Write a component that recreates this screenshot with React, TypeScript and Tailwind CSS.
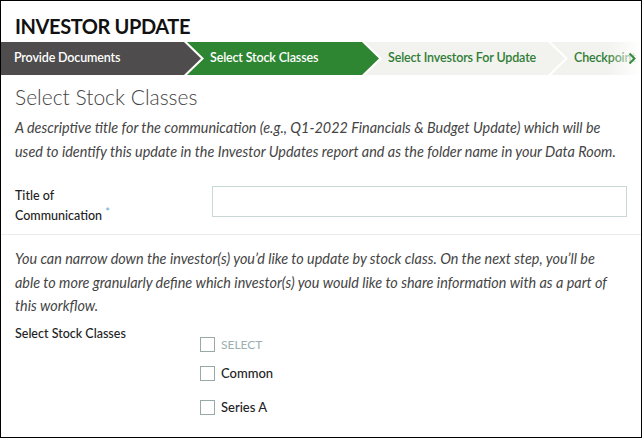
import React from "react";

const steps = [
  { label: "Provide Documents", width: 200, bg: "bg-[#4e4c4c]", text: "text-white", first: true },
  { label: "Select Stock Classes", width: 192, bg: "bg-[#2e8532]", text: "text-white" },
  { label: "Select Investors For Update", width: 200, bg: "bg-[#f2f2ef]", text: "text-[#2f7d34]" },
  { label: "Checkpoint", width: 140, bg: "bg-[#f2f2ef]", text: "text-[#2f7d34]" },
];

const firstClip = "polygon(0 0, calc(100% - 17px) 0, 100% 50%, calc(100% - 17px) 100%, 0 100%)";
const midClip =
  "polygon(0 0, calc(100% - 17px) 0, 100% 50%, calc(100% - 17px) 100%, 0 100%, 17px 50%)";

const StepBar = () => (
  <div className="relative mt-[3px] flex h-[33px] overflow-hidden bg-white">
    {steps.map((s, i) => (
      <div
        key={s.label}
        className={`flex h-full shrink-0 items-center text-[12.5px] font-semibold tracking-[-0.15px] ${s.bg} ${s.text} ${
          i === 0 ? "pl-[13px]" : "-ml-[14px] pl-[23px]"
        }`}
        style={{ width: s.width, clipPath: s.first ? firstClip : midClip }}
      >
        {s.label}
      </div>
    ))}
    <div className="pointer-events-none absolute right-0 top-0 h-full w-[34px] bg-gradient-to-r from-white/0 to-white" />
    <svg
      className="absolute right-[5px] top-[10px]"
      width="8"
      height="13"
      viewBox="0 0 8 13"
      fill="none"
    >
      <path d="M1.5 1.5 L6.5 6.5 L1.5 11.5" stroke="#3a8a3d" strokeWidth="2" />
    </svg>
  </div>
);

const Checkbox = ({ label, muted, className }: { label: string; muted?: boolean; className?: string }) => (
  <label className={`flex h-[20px] items-center gap-[6px] ${className ?? ""}`}>
    <span className="h-[15px] w-[15px] border border-[#9aa8a8] bg-white" />
    <span
      className={
        muted
          ? "text-[12px] uppercase text-[#9aafaf]"
          : "text-[13px] font-medium text-[#222]"
      }
    >
      {label}
    </span>
  </label>
);

export default function App() {
  return (
    <div
      className="h-[438px] w-[642px] overflow-hidden border border-black bg-white text-[#333]"
      style={{ fontFamily: "Lato, 'Noto Sans', sans-serif" }}
    >
      <h1 className="px-[14px] pt-[12px] text-[20px] font-bold leading-[26px] tracking-[-0.4px] text-[#111]">
        INVESTOR UPDATE
      </h1>
      <StepBar />

      <div className="px-[14px]">
        <h2 className="mt-[8px] text-[21px] font-light leading-[28px] text-[#444]">
          Select Stock Classes
        </h2>
        <p className="-mr-[4px] mt-[5px] text-[14.4px] italic leading-[24px] text-[#444]">
          A descriptive title for the communication (e.g., Q1-2022 Financials &amp; Budget Update)
          which will be used to identify this update in the Investor Updates report and as the
          folder name in your Data Room.
        </p>
        <div className="mt-[22px] flex items-start">
          <div className="w-[197px] text-[12.5px] font-medium leading-[20px] text-[#222]">
            Title of
            <br />
            Communication{" "}
            <span className="relative -top-[4px] text-[11px] text-[#6aaed6]">*</span>
          </div>
          <input
            type="text"
            className="h-[31px] w-[415px] border border-[#c9d7d7] bg-white outline-none"
          />
        </div>
      </div>

      <div className="mt-[8px] border-t border-[#ececec]" />

      <div className="px-[14px]">
        <p className="mt-[12px] pr-[8px] text-[14.4px] italic leading-[23.5px] text-[#444]">
          You can narrow down the investor(s) you’d like to update by stock class. On the next
          step, you’ll be able to more granularly define which investor(s) you would like to share
          information with as a part of this workflow.
        </p>
        <div className="mt-[6px] flex items-start">
          <div className="w-[185px] text-[12.5px] font-medium leading-[20px] text-[#222]">
            Select Stock Classes
          </div>
          <div className="flex flex-col pt-[11px]">
            <Checkbox label="Select" muted />
            <Checkbox label="Common" className="mt-[9px]" />
            <Checkbox label="Series A" className="mt-[14px]" />
          </div>
        </div>
      </div>
    </div>
  );
}
